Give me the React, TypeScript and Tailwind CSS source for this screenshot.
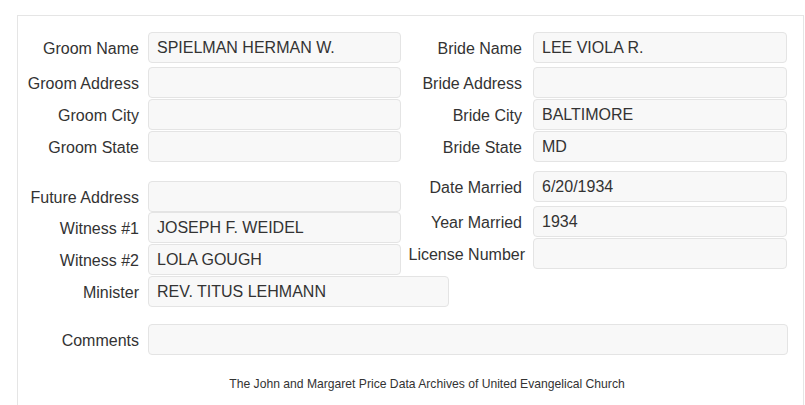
import React from "react";

const Label = ({ children, w = "w-[121px]" }: { children: React.ReactNode; w?: string }) => (
  <div className={`${w} shrink-0 text-right whitespace-nowrap pt-[3px] text-[16px] leading-[18px]`}>{children}</div>
);

const Field = ({ value = "", w = "w-[253px]" }: { value?: string; w?: string }) => (
  <div className={`${w} h-[31px] shrink-0 rounded-[4px] border border-[#e4e4e4] bg-[#f8f8f8] pl-[8px] flex items-center text-[16px] whitespace-nowrap`}>
    {value}
  </div>
);

const Pair = ({
  label,
  value,
  gap = "ml-[9px]",
  w,
  lw,
  mt = "",
}: {
  label: string;
  value?: string;
  gap?: string;
  w?: string;
  lw?: string;
  mt?: string;
}) => (
  <div className={`flex items-center ${mt}`}>
    <Label w={lw}>{label}</Label>
    <div className={gap}>
      <Field value={value} w={w} />
    </div>
  </div>
);

const TopRow = ({
  l,
  lv,
  r,
  rv,
  mt = "",
}: {
  l: string;
  lv?: string;
  r: string;
  rv?: string;
  mt?: string;
}) => (
  <div className={`flex items-center ${mt}`}>
    <Label>{l}</Label>
    <div className="ml-[9px]">
      <Field value={lv} />
    </div>
    <Label>{r}</Label>
    <div className="ml-[11px]">
      <Field value={rv} w="w-[254px]" />
    </div>
  </div>
);

export default function App() {
  return (
    <div className="w-[805px] h-[405px] overflow-hidden bg-white text-[#333] font-['Liberation_Sans',Arial,sans-serif]">
      <div className="ml-[17px] mt-[15px] w-[787px] h-[430px] border border-b-0 border-[#e5e5e5] pt-[16px]">
        <TopRow l="Groom Name" lv="SPIELMAN HERMAN W." r="Bride Name" rv="LEE VIOLA R." />
        <TopRow l="Groom Address" r="Bride Address" mt="mt-[4px]" />
        <TopRow l="Groom City" r="Bride City" rv="BALTIMORE" mt="mt-[1px]" />
        <TopRow l="Groom State" r="Bride State" rv="MD" mt="mt-[1px]" />

        <div className="flex items-start mt-[9px]">
          <div className="w-[383px] shrink-0 pt-[10px]">
            <Pair label="Future Address" />
            <Pair label="Witness #1" value="JOSEPH F. WEIDEL" />
            <Pair label="Witness #2" value="LOLA GOUGH" mt="mt-[1px]" />
            <Pair label="Minister" value="REV. TITUS LEHMANN" w="w-[301px]" mt="mt-[1px]" />
          </div>
          <div className="shrink-0">
            <Pair label="Date Married" value="6/20/1934" gap="ml-[11px]" w="w-[254px]" />
            <Pair label="Year Married" value="1934" gap="ml-[11px]" w="w-[254px]" mt="mt-[4px]" />
            <Pair label="License Number" lw="w-[124px]" gap="ml-[8px]" w="w-[254px]" mt="mt-[1px]" />
          </div>
        </div>

        <div className="mt-[17px]">
          <Pair label="Comments" w="w-[640px]" />
        </div>

        <div className="mt-[22px] pl-[33px] text-center text-[12.15px] leading-[14px]">
          The John and Margaret Price Data Archives of United Evangelical Church
        </div>
      </div>
    </div>
  );
}
